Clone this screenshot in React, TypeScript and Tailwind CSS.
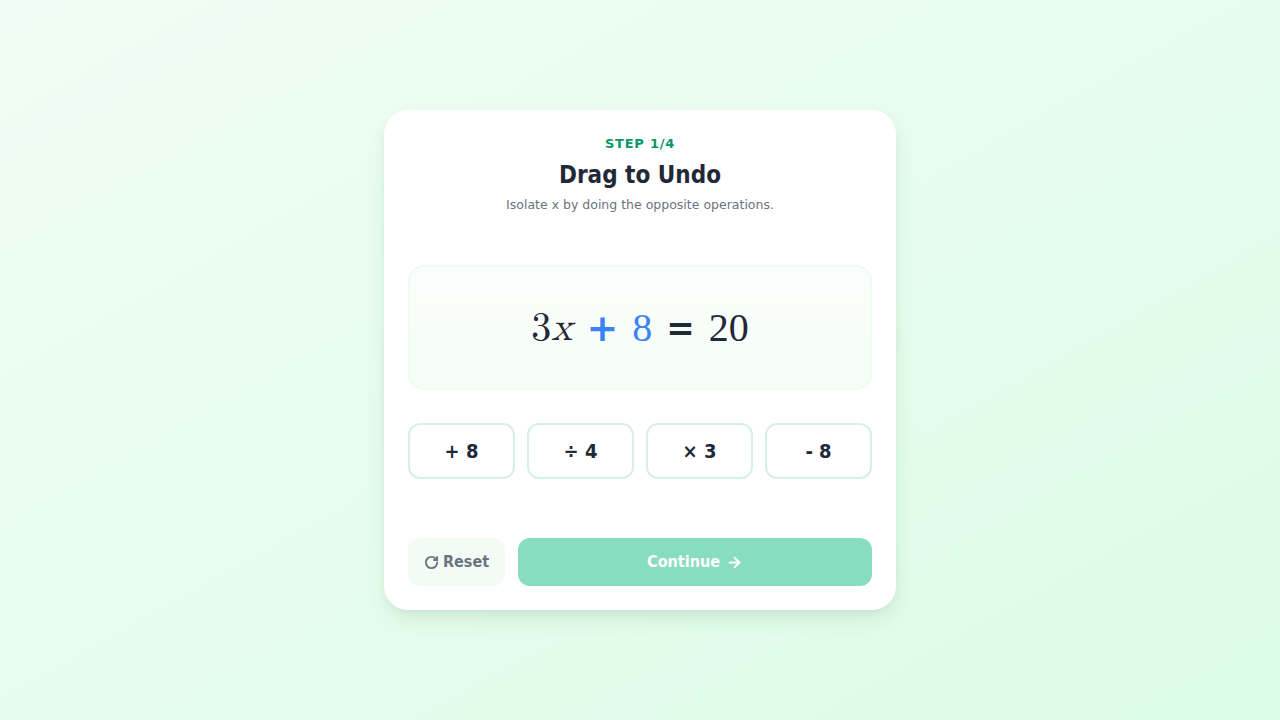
import { RotateCw, ArrowRight } from "lucide-react";

const ops = ["+ 8", "÷ 4", "× 3", "- 8"];

export default function App() {
  return (
    <div
      className="w-full h-[720px] flex items-center justify-center bg-gradient-to-br from-[#f0fdf4] to-[#dcfce7]"
      style={{ fontFamily: "'DejaVu Sans Condensed', 'DejaVu Sans', Verdana, sans-serif" }}
    >
      <div className="w-[512px] h-[500px] bg-white rounded-3xl shadow-[0_10px_25px_-5px_rgba(16,80,50,0.12),0_4px_10px_-4px_rgba(16,80,50,0.1)] px-6 pt-[26px] pb-6 flex flex-col">
        {/* Header */}
        <div className="flex flex-col items-center">
          <div
            className="text-[13px] leading-4 font-bold tracking-[0.06em] text-[#059669]"
            style={{ fontFamily: "'DejaVu Sans', sans-serif" }}
          >
            STEP 1/4
          </div>
          <h1 className="mt-[7px] text-[24px] leading-8 font-bold text-[#1f2937]">Drag to Undo</h1>
          <p
            className="mt-1 text-[12.5px] leading-5 text-[#6b7280]"
            style={{ fontFamily: "'DejaVu Sans', sans-serif" }}
          >
            Isolate x by doing the opposite operations.
          </p>
        </div>

        {/* Equation */}
        <div className="mt-[50px] h-[125px] shrink-0 rounded-2xl border-2 border-[#ecfdf3] bg-gradient-to-b from-[#fbfefc] to-[#f5fdf8] flex items-center justify-center">
          <div className="flex items-center gap-[14px] text-[40px] leading-none text-[#1f2937]">
            <span style={{ fontFamily: "'Latin Modern Math', 'Liberation Serif', serif" }}>
              3<i>x</i>
            </span>
            <span className="font-bold text-[#3b82f6] text-[38px]" style={{ fontFamily: "'DejaVu Sans', sans-serif" }}>+</span>
            <span className="text-[#3b82f6]" style={{ fontFamily: "'Liberation Serif', serif" }}>8</span>
            <span className="font-bold text-[34px]" style={{ fontFamily: "'DejaVu Sans', sans-serif" }}>=</span>
            <span style={{ fontFamily: "'Liberation Serif', serif" }}>20</span>
          </div>
        </div>

        {/* Operations */}
        <div className="mt-[33px] grid grid-cols-4 gap-3">
          {ops.map((op) => (
            <button
              key={op}
              className="h-14 rounded-xl border-2 border-[#d7f0e6] bg-white text-[20px] font-bold text-[#1f2937] flex items-center justify-center"
            >
              {op}
            </button>
          ))}
        </div>

        {/* Footer */}
        <div className="mt-auto flex gap-[13px]">
          <button className="w-[97px] h-12 rounded-xl bg-[#f2fcf5] text-[#6b7280] font-bold text-[16px] flex items-center justify-center gap-1">
            <RotateCw size={15} strokeWidth={3} />
            Reset
          </button>
          <button className="flex-1 h-12 rounded-xl bg-[#88dcc0] text-white font-bold text-[16px] flex items-center justify-center gap-1.5">
            Continue
            <ArrowRight size={17} strokeWidth={2.5} />
          </button>
        </div>
      </div>
    </div>
  );
}
